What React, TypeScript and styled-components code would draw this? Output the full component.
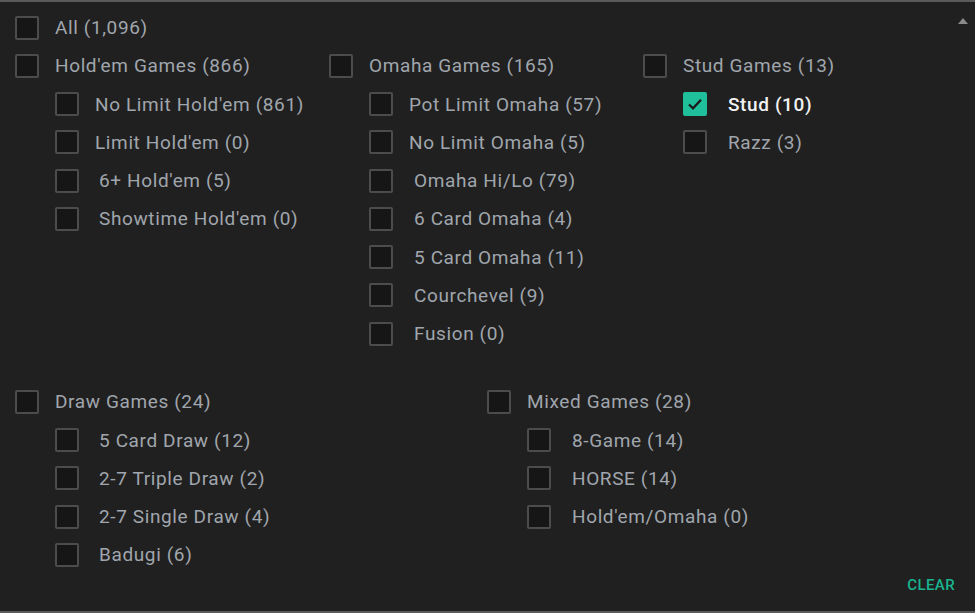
import React from "react"
import styled, { createGlobalStyle } from "styled-components"

const GlobalStyle = createGlobalStyle`
  html, body {
    margin: 0;
    padding: 0;
    background: #202020;
  }
  body {
    font-family: Roboto, "Liberation Sans", sans-serif;
  }
`

type Item = { label: string; checked?: boolean; gap?: number }
type Group = { title: string; items: Item[] }

const topGroups: Group[] = [
  {
    title: "Hold'em Games (866)",
    items: [
      { label: "No Limit Hold'em (861)" },
      { label: "Limit Hold'em (0)" },
      { label: "6+ Hold'em (5)", gap: 44 },
      { label: "Showtime Hold'em (0)", gap: 44 },
    ],
  },
  {
    title: "Omaha Games (165)",
    items: [
      { label: "Pot Limit Omaha (57)" },
      { label: "No Limit Omaha (5)" },
      { label: "Omaha Hi/Lo (79)", gap: 45 },
      { label: "6 Card Omaha (4)", gap: 45 },
      { label: "5 Card Omaha (11)", gap: 45 },
      { label: "Courchevel (9)", gap: 45 },
      { label: "Fusion (0)", gap: 45 },
    ],
  },
  {
    title: "Stud Games (13)",
    items: [
      { label: "Stud (10)", checked: true, gap: 45 },
      { label: "Razz (3)", gap: 45 },
    ],
  },
]

const bottomGroups: Group[] = [
  {
    title: "Draw Games (24)",
    items: [
      { label: "5 Card Draw (12)", gap: 44 },
      { label: "2-7 Triple Draw (2)", gap: 44 },
      { label: "2-7 Single Draw (4)", gap: 44 },
      { label: "Badugi (6)", gap: 44 },
    ],
  },
  {
    title: "Mixed Games (28)",
    items: [
      { label: "8-Game (14)", gap: 45 },
      { label: "HORSE (14)", gap: 45 },
      { label: "Hold'em/Omaha (0)", gap: 45 },
    ],
  },
]

const CheckRow = ({ label, checked, gap }: Item) => (
  <Row>
    <Box $checked={checked}>
      {checked && (
        <svg width="18" height="18" viewBox="0 0 18 18">
          <path d="M3 9.5 L7 13.3 L15 4.8" fill="none" stroke="#1b1b1b" strokeWidth="2.3" />
        </svg>
      )}
    </Box>
    <Label $checked={checked} $gap={gap ?? 40}>{label}</Label>
  </Row>
)

const GroupBlock = ({ group }: { group: Group }) => (
  <Column>
    <CheckRow label={group.title} />
    <Children>
      {group.items.map((it) => (
        <CheckRow key={it.label} {...it} />
      ))}
    </Children>
  </Column>
)

const App = () => {
  return (
    <Panel>
      <GlobalStyle />
      <ScrollArrow />
      <CheckRow label="All (1,096)" />
      <TopGrid>
        {topGroups.map((g) => (
          <GroupBlock key={g.title} group={g} />
        ))}
      </TopGrid>
      <BottomGrid>
        {bottomGroups.map((g) => (
          <GroupBlock key={g.title} group={g} />
        ))}
      </BottomGrid>
      <Footer>
        <ClearButton>CLEAR</ClearButton>
      </Footer>
    </Panel>
  )
}

const Panel = styled.div`
  position: relative;
  box-sizing: border-box;
  width: 975px;
  height: 613px;
  background: #202020;
  border-top: 2px solid #5a5a5a;
  border-bottom: 2px solid #5a5a5a;
  padding: 6.5px 0 0 15px;
  overflow: hidden;
`

const ScrollArrow = styled.div`
  position: absolute;
  top: 16px;
  right: 7px;
  width: 0;
  height: 0;
  border-left: 5px solid transparent;
  border-right: 5px solid transparent;
  border-bottom: 6px solid #8a8a8a;
`

const TopGrid = styled.div`
  display: grid;
  grid-template-columns: 314px 314px 300px;
`

const BottomGrid = styled.div`
  display: grid;
  grid-template-columns: 472px 400px;
  margin-top: 30px;
`

const Column = styled.div`
  display: flex;
  flex-direction: column;
`

const Children = styled.div`
  display: flex;
  flex-direction: column;
  padding-left: 40px;
`

const Row = styled.div`
  display: flex;
  align-items: center;
  height: 38.25px;
  position: relative;
`

const Box = styled.div<{ $checked?: boolean }>`
  box-sizing: border-box;
  width: 24px;
  height: 24px;
  flex-shrink: 0;
  border-radius: 2px;
  border: 2px solid ${({ $checked }) => ($checked ? "#1fbf9c" : "#4c4c4c")};
  background: ${({ $checked }) => ($checked ? "#1fbf9c" : "#161616")};
  display: flex;
  align-items: center;
  justify-content: center;
`

const Label = styled.span<{ $checked?: boolean; $gap: number }>`
  position: absolute;
  left: ${({ $gap }) => $gap}px;
  white-space: nowrap;
  font-size: 19px;
  font-weight: ${({ $checked }) => ($checked ? 500 : 400)};
  color: ${({ $checked }) => ($checked ? "#f2f2f2" : "#a0a6ad")};
  letter-spacing: 0.62px;
`

const Footer = styled.div`
  display: flex;
  justify-content: flex-end;
  padding: 2px 20px 0 0;
`

const ClearButton = styled.span`
  font-size: 15px;
  font-weight: 500;
  color: #19b58f;
  letter-spacing: 0.4px;
`

export default App
